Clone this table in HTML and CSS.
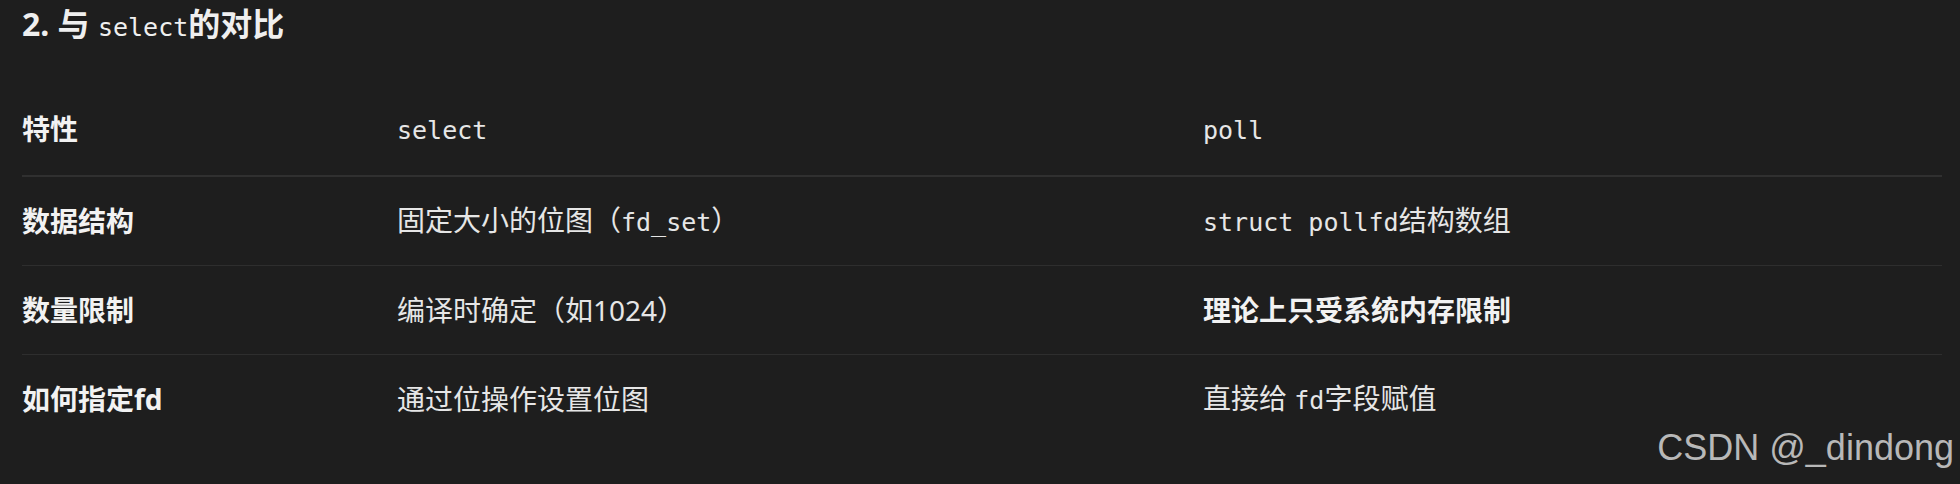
FILE: index.html
```html
<!DOCTYPE html>
<html lang="zh-CN">
<head>
<meta charset="utf-8">
<link rel="stylesheet" href="styles.css">
</head>
<body>
<main class="page">
  <h3 class="title">2. 与 <code>select</code>的对比</h3>
  <table class="cmp">
    <colgroup><col class="c1"><col class="c2"><col class="c3"></colgroup>
    <thead>
      <tr><th>特性</th><th class="normal"><code>select</code></th><th class="normal"><code>poll</code></th></tr>
    </thead>
    <tbody>
      <tr><td><strong>数据结构</strong></td><td>固定大小的位图（<code>fd_set</code>）</td><td><code>struct pollfd</code>结构数组</td></tr>
      <tr><td><strong>数量限制</strong></td><td>编译时确定（如1024）</td><td><strong>理论上只受系统内存限制</strong></td></tr>
      <tr><td><strong>如何指定fd</strong></td><td>通过位操作设置位图</td><td>直接给 <code>fd</code>字段赋值</td></tr>
    </tbody>
  </table>
</main>
<div class="watermark">CSDN @_dindong</div>
</body>
</html>
```

FILE: styles.css
```css
html, body {
  margin: 0;
  padding: 0;
  background: #1e1e1e;
  height: 100%;
  overflow: hidden;
}
body {
  font-family: "Noto Sans", "Noto Sans CJK SC", sans-serif;
  color: #e6e6e6;
  position: relative;
}
.page {
  padding: 0 18px 0 22px;
}
.title {
  margin: 0;
  font-size: 32px;
  line-height: 48px;
  font-weight: 700;
  color: #efefef;
}
.title code {
  font-weight: 400;
  line-height: 1;
}
code {
  font-family: "DejaVu Sans Mono", "Liberation Mono", "Noto Sans CJK SC", monospace;
  font-size: 25px;
}
.cmp {
  margin-top: 41px;
  width: 100%;
  border-collapse: collapse;
  table-layout: fixed;
  font-size: 28px;
}
.c1 { width: 375px; }
.c2 { width: 806px; }
.cmp th, .cmp td {
  text-align: left;
  padding: 0;
  line-height: 40px;
  vertical-align: middle;
}
.cmp th {
  height: 80px;
  padding-bottom: 6px;
  font-weight: 700;
  color: #f2f2f2;
}
.cmp td {
  height: 88px;
}
.cmp th.normal {
  font-weight: 400;
  color: #e6e6e6;
}
.cmp thead tr {
  border-bottom: 2px solid #303030;
}
.cmp tbody tr {
  border-bottom: 1px solid #2e2e2e;
}
.cmp tbody tr:last-child {
  border-bottom: none;
}
.cmp strong {
  font-weight: 700;
  color: #f2f2f2;
}
.watermark {
  position: absolute;
  right: 6px;
  top: 426px;
  font-family: "Liberation Sans", Arial, sans-serif;
  font-size: 36px;
  line-height: 44px;
  color: #b8b8b8;
}
```
